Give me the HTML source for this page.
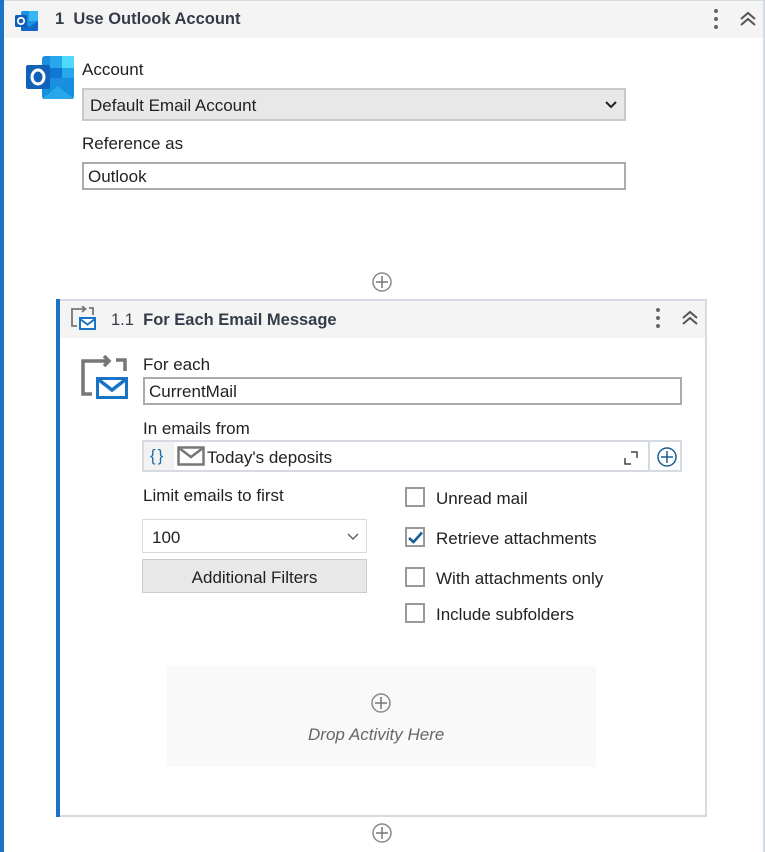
<!DOCTYPE html>
<html><head><meta charset="utf-8"><style>
*{box-sizing:border-box;margin:0;padding:0}
body{width:765px;height:852px;background:#fff;font-family:"Segoe UI","Liberation Sans",sans-serif;color:#222;position:relative;overflow:hidden;font-size:17px}
.a{position:absolute}
.lbl{position:absolute;font-size:17px;color:#222;white-space:nowrap;margin-top:2px}
.inp{position:absolute;border:2px solid #aaa;background:#fff;font-size:17px;padding-left:4px;line-height:26px}
.cb{position:absolute;width:20px;height:20px;border:2px solid #999;background:#fff}
</style></head><body>
<div class="a" style="left:0;top:0;width:765px;height:852px;border-top:1px solid #d5dbe1;border-right:2px solid #d5dbe1"></div>
<div class="a" style="left:0;top:0;width:4px;height:852px;background:#1a73c5"></div>
<div class="a" style="left:4px;top:1px;width:759px;height:37px;background:#f4f4f4"></div>
<svg class="a" style="left:14px;top:10px" width="26" height="22" viewBox="0 0 26 22">
<rect x="7" y="1" width="17" height="20" rx="2" fill="#1b8fe0"/><rect x="15" y="1" width="9" height="10" fill="#36b6f2"/>
<path d="M7 11 L15.5 17 L24 11 V20 a1 1 0 0 1-1 1 H8 a1 1 0 0 1-1-1Z" fill="#1266c4"/>
<rect x="1" y="5" width="12" height="12" rx="1.5" fill="#0f5fb8"/><circle cx="7" cy="11" r="3.2" fill="none" stroke="#fff" stroke-width="1.8"/></svg>
<div class="lbl" style="left:55px;top:8px;font-weight:bold;color:#333c48;font-size:16.5px">1&nbsp; Use Outlook Account</div>
<div class="a" style="left:714px;top:9px;width:4px;height:4px;border-radius:2px;background:#666;box-shadow:0 8px 0 #666,0 16px 0 #666"></div>
<svg class="a" style="left:739px;top:11px" width="18" height="16" viewBox="0 0 18 16"><path d="M2 8 L9 2 L16 8 M2 14 L9 8 L16 14" fill="none" stroke="#555" stroke-width="2"/></svg>
<svg class="a" style="left:24px;top:55px" width="52" height="46" viewBox="0 0 52 46">
<rect x="18" y="1" width="32" height="43" rx="3" fill="#1d8fe1"/>
<rect x="26" y="1" width="12" height="12" fill="#28a8ea"/><rect x="38" y="1" width="12" height="12" fill="#50d9ff"/>
<rect x="26" y="13" width="12" height="10" fill="#0f78d4"/><rect x="38" y="13" width="12" height="10" fill="#28a8ea"/>
<path d="M18 22 L34 33 L50 22 V41 a3 3 0 0 1-3 3 H21 a3 3 0 0 1-3-3Z" fill="#1490df"/>
<path d="M18 44 L34 31 L50 44Z" fill="#28a8ea"/>
<rect x="2" y="10" width="24" height="24" rx="2" fill="#0f62b8"/>
<ellipse cx="14" cy="22" rx="6" ry="7" fill="none" stroke="#fff" stroke-width="3"/></svg>
<div class="lbl" style="left:82px;top:58px">Account</div>
<div class="a" style="left:82px;top:88px;width:544px;height:33px;background:#e8e8e8;border:2px solid #c8c8c8;padding-left:6px;line-height:31px;font-size:17px">Default Email Account</div>
<svg class="a" style="left:604px;top:100px" width="14" height="9" viewBox="0 0 14 9"><path d="M2 2 L7 7 L12 2" fill="none" stroke="#222" stroke-width="2"/></svg>
<div class="lbl" style="left:82px;top:132px">Reference as</div>
<div class="inp" style="left:82px;top:162px;width:544px;height:28px">Outlook</div>
<svg class="a" style="left:371px;top:271px" width="22" height="22" viewBox="0 0 22 22"><circle cx="11" cy="11" r="9" fill="none" stroke="#888" stroke-width="1.5"/><path d="M11 5V17M5 11H17" stroke="#777" stroke-width="1.5"/></svg>
<div class="a" style="left:56px;top:299px;width:651px;height:518px;border:2px solid #d5dbe1;border-left:none"></div>
<div class="a" style="left:56px;top:299px;width:4px;height:518px;background:#1a73c5"></div>
<div class="a" style="left:60px;top:301px;width:645px;height:37px;background:#f4f4f4"></div>
<svg class="a" style="left:69px;top:306px" width="28" height="26" viewBox="0 0 28 26"><path d="M3 13 V3 H16 M13 0 L16.5 3 L13 6 M20 2 H24 V9" fill="none" stroke="#777" stroke-width="1.8"/><path d="M3 13V20H8" fill="none" stroke="#777" stroke-width="1.8"/><rect x="11" y="12" width="15" height="11" fill="#fff" stroke="#1a73c5" stroke-width="2"/><path d="M11 13 L18.5 18.5 L26 13" fill="none" stroke="#1a73c5" stroke-width="2"/></svg>
<div class="lbl" style="left:111px;top:309px;color:#333c48;font-size:16.5px"><span>1.1</span>&nbsp; <b>For Each Email Message</b></div>
<div class="a" style="left:656px;top:308px;width:4px;height:4px;border-radius:2px;background:#666;box-shadow:0 8px 0 #666,0 16px 0 #666"></div>
<svg class="a" style="left:681px;top:310px" width="18" height="16" viewBox="0 0 18 16"><path d="M2 8 L9 2 L16 8 M2 14 L9 8 L16 14" fill="none" stroke="#555" stroke-width="2"/></svg>
<svg class="a" style="left:80px;top:355px" width="52" height="48" viewBox="0 0 52 48"><path d="M3 34 V6 H28 M24 1 L29 6 L24 11 M36 5 H45 V16" fill="none" stroke="#777" stroke-width="3.5"/><path d="M3 33V39H12" fill="none" stroke="#777" stroke-width="3.5"/><rect x="16" y="22" width="32" height="22" fill="#1a73c5"/><rect x="19" y="25" width="26" height="16" fill="#fff"/><path d="M19 25 L32 35 L45 25" fill="none" stroke="#1a73c5" stroke-width="3.5"/></svg>
<div class="lbl" style="left:143px;top:353px">For each</div>
<div class="inp" style="left:143px;top:377px;width:539px;height:28px">CurrentMail</div>
<div class="lbl" style="left:143px;top:417px">In emails from</div>
<div class="a" style="left:142px;top:440px;width:540px;height:32px;border:2px solid #d5dbe1;background:#fff"></div>
<div class="a" style="left:144px;top:442px;width:30px;height:28px;background:#f2f2f2"></div>
<div class="lbl" style="left:150px;top:444px;color:#1a6fa8;letter-spacing:2px;font-weight:300">{}</div>
<svg class="a" style="left:177px;top:446px" width="28" height="20" viewBox="0 0 28 20"><rect x="1.5" y="1.5" width="25" height="17" fill="none" stroke="#777" stroke-width="2.5"/><path d="M2 2 L14 11 L26 2" fill="none" stroke="#777" stroke-width="2.5"/></svg>
<div class="lbl" style="left:207px;top:446px">Today's deposits</div>
<svg class="a" style="left:623px;top:450px" width="16" height="16" viewBox="0 0 16 16"><path d="M2 8V14H8M8 2H14V8" fill="none" stroke="#444" stroke-width="1.5"/></svg>
<div class="a" style="left:648px;top:442px;width:2px;height:28px;background:#d5dbe1"></div>
<svg class="a" style="left:656px;top:446px" width="22" height="22" viewBox="0 0 22 22"><circle cx="11" cy="11" r="9" fill="none" stroke="#1a5f90" stroke-width="1.5"/><path d="M11 5V17M5 11H17" stroke="#1a5f90" stroke-width="1.5"/></svg>
<div class="lbl" style="left:143px;top:484px">Limit emails to first</div>
<div class="a" style="left:142px;top:519px;width:225px;height:34px;border:1px solid #d5dbe1;background:#fff;padding-left:9px;line-height:36px;font-size:17px">100</div>
<svg class="a" style="left:347px;top:533px" width="12" height="8" viewBox="0 0 12 8"><path d="M1 1 L6 6 L11 1" fill="none" stroke="#666" stroke-width="1.5"/></svg>
<div class="a" style="left:142px;top:559px;width:225px;height:34px;border:1px solid #ccc;background:#e8e8e8;text-align:center;line-height:35px;font-size:17px">Additional Filters</div>
<div class="cb" style="left:405px;top:487px"></div><div class="lbl" style="left:436px;top:487px">Unread mail</div>
<div class="cb" style="left:405px;top:527px"></div>
<svg class="a" style="left:408px;top:531px" width="15" height="13" viewBox="0 0 15 13"><path d="M1 7 L5.5 11 L14 1.5" fill="none" stroke="#1a5f90" stroke-width="2.6"/></svg>
<div class="lbl" style="left:436px;top:527px">Retrieve attachments</div>
<div class="cb" style="left:405px;top:567px"></div><div class="lbl" style="left:436px;top:567px">With attachments only</div>
<div class="cb" style="left:405px;top:603px"></div><div class="lbl" style="left:436px;top:603px">Include subfolders</div>
<div class="a" style="left:167px;top:666px;width:429px;height:101px;background:#f9f9f9"></div>
<svg class="a" style="left:370px;top:692px" width="22" height="22" viewBox="0 0 22 22"><circle cx="11" cy="11" r="9" fill="none" stroke="#888" stroke-width="1.5"/><path d="M11 5V17M5 11H17" stroke="#777" stroke-width="1.5"/></svg>
<div class="lbl" style="left:308px;top:723px;font-style:italic;color:#666">Drop Activity Here</div>
<svg class="a" style="left:371px;top:822px" width="22" height="22" viewBox="0 0 22 22"><circle cx="11" cy="11" r="9" fill="none" stroke="#888" stroke-width="1.5"/><path d="M11 5V17M5 11H17" stroke="#777" stroke-width="1.5"/></svg>
</body></html>
